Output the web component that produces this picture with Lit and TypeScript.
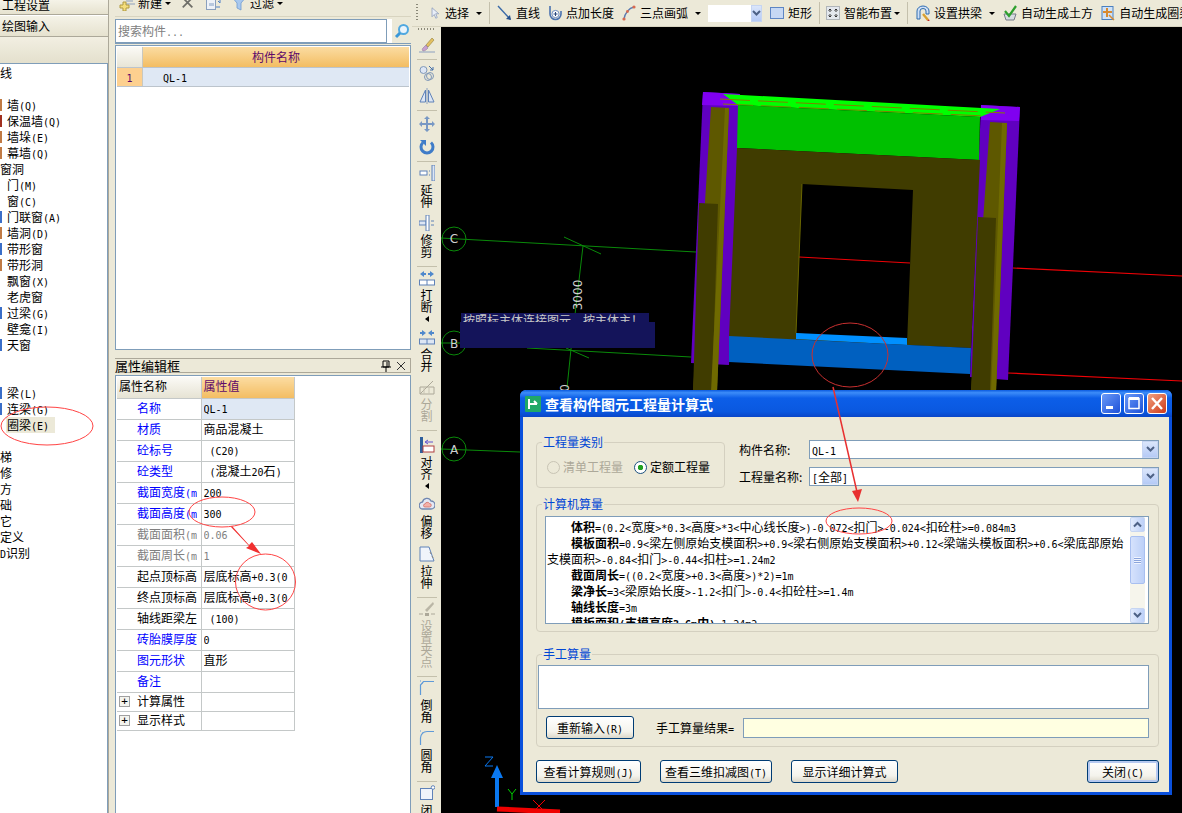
import {LitElement, css, html, svg} from 'lit'
import {customElement} from 'lit/decorators.js'

// SimSun style run: latin is exactly half a CJK cell
const t = (s: string) =>
  s.split(/([\x20-\x7e]+)/).map((p, i) => (i % 2 ? html`<span class="en">${p}</span>` : p))

const icon = (body: unknown, w = 16, h = 16) =>
  html`<svg class="ic" width=${w} height=${h} viewBox="0 0 16 16">${body}</svg>`

const icons: Record<string, unknown> = {
  pointer: svg`<path d="M4 1v12l3-3 2 5 2-1-2-5h4z" fill="#e8eef8" stroke="#8a9ab8"/>`,
  line: svg`<path d="M1 1l12 13" stroke="#3a6aa8" stroke-width="1.4"/><path d="M14 15l-5-1 4-4z" fill="#24508c"/>`,
  pointlen: svg`<path d="M3 1v8a5.5 5.5 0 0 0 11 0V6" fill="none" stroke="#4a72b0" stroke-width="1.6"/><circle cx="8.5" cy="9" r="3.6" fill="#fff" stroke="#6d8cc0"/><path d="M6.5 9h4M8.500 7v4" stroke="#27467a"/>`,
  arc: svg`<path d="M3 14C4 8 8 3 13 2" fill="none" stroke="#5a7ab0" stroke-width="1.5"/><circle cx="3" cy="14" r="1.6" fill="#d86a50"/><circle cx="13" cy="2" r="1.6" fill="#d86a50"/><circle cx="6.500" cy="6.500" r="1.400" fill="#d86a50"/>`,
  rect: svg`<rect x="1.500" y="2.500" width="13" height="11" fill="#c6d8f4" stroke="#5e86c4"/>`,
  smart: svg`<rect x="1.500" y="1.500" width="13" height="13" fill="#e4e8ee" stroke="#7a8490" stroke-dasharray="1 1"/><path d="M5 4v3M3.500 5.500L5 4l1.500 1.500M11 4v3M9.500 5.500L11 4l1.500 1.500M5 12V9M3.500 10.500L5 12l1.500-1.500M11 12V9M9.500 10.500L11 12l1.500-1.500" fill="none" stroke="#333"/>`,
  arch: svg`<path d="M2 14V6a6 5 0 0 1 12 0v3h-3V6a3 2.500 0 0 0-6 0v8z" fill="#cfe0f6" stroke="#2f6cb0"/><path d="M8 9l5 6" stroke="#d8a030" stroke-width="2.400"/><path d="M13 15l1 1" stroke="#c02020" stroke-width="2"/>`,
  soil: svg`<path d="M2 9h12l-2 6H4z" fill="#d8dce2" stroke="#767c88"/><path d="M3 6l4 5 7-10" fill="none" stroke="#2ea02e" stroke-width="2.200"/>`,
  ring: svg`<rect x="2" y="1.500" width="11" height="13" fill="#cfe2f8" stroke="#4a80c0"/><path d="M7 3v9M3 7h9" stroke="#d88a30" stroke-width="2"/><path d="M9 10l5 5" stroke="#d88a30" stroke-width="1.500"/>`,
  brush: svg`<path d="M13 1L7 8l2 2 6-7z" fill="#e4c060" stroke="#908040" stroke-width=".6"/><path d="M7 8l-3 3c-1 1-1 2 0 3 2 0 3-1 5-3z" fill="#c8a0d0" stroke="#807090" stroke-width=".5"/><path d="M0 15h16" stroke="#8ca0c0"/>`,
  link: svg`<circle cx="4.500" cy="5" r="3.500" fill="#dde6f4" stroke="#8098b8"/><circle cx="11" cy="11" r="3.500" fill="none" stroke="#8098b8"/><circle cx="9" cy="12" r="3.500" fill="none" stroke="#8098b8"/><path d="M10 1l4 4M14 2v3h-3" fill="none" stroke="#406ca8"/>`,
  mirror: svg`<path d="M6.500 2v12H1zM9.500 2v12H15z" fill="#dde6f4" stroke="#5f82b8"/><path d="M8 0v16" stroke="#8aa0c0"/>`,
  move: svg`<path d="M8 0l3 3H9v4h4V5l3 3-3 3V9H9v4h2l-3 3-3-3h2V9H3v2L0 8l3-3v2h4V3H5z" fill="#7898c4"/>`,
  rotate: svg`<path d="M4 3.500a6 6 0 1 0 8 0" fill="none" stroke="#3f7cc8" stroke-width="3"/><path d="M1 1h6v6z" fill="#3f7cc8"/>`,
  extend: svg`<rect x="1" y="6" width="7" height="4" fill="#fff" stroke="#5f82b8"/><path d="M10 6h1M10 10h1" stroke="#5f82b8"/><rect x="13" y="0" width="3" height="16" fill="#dde6f4" stroke="#5f82b8"/>`,
  trim: svg`<rect x="0" y="6" width="7" height="4" fill="#dde6f4" stroke="#5f82b8"/><rect x="7" y="0" width="3" height="16" fill="#fff" stroke="#5f82b8"/><path d="M12 6h3M12 10h3" stroke="#5f82b8"/>`,
  break: svg`<path d="M1 4l4-3v2h2v2H5v2zM15 4l-4-3v2H9v2h2v2z" fill="#4f88cc"/><rect x=".5" y="10" width="15" height="5" fill="#fff" stroke="#5f82b8"/><path d="M8 10v5" stroke="#5f82b8"/>`,
  merge: svg`<path d="M7 4L3 1v2H1v2h2v2zM9 4l4-3v2h2v2h-2v2z" fill="#4f88cc"/><rect x=".5" y="10" width="15" height="5" fill="#dde6f4" stroke="#5f82b8"/><path d="M8 10v5" stroke="#5f82b8"/>`,
  split: svg`<path d="M1 8h14v7H1zM1 15l13-13" fill="none" stroke="#aca899"/><path d="M5 8v7M10 8v7" stroke="#c8c4b4"/>`,
  align: svg`<rect x="1" y="0" width="3" height="16" fill="#2f5f9c"/><rect x="4" y="9" width="11" height="6" fill="#fff" stroke="#b04040"/><path d="M14 5H7M9 3L6 5l3 2" fill="none" stroke="#6050d0"/>`,
  offset: svg`<path d="M4 13a3.500 3.500 0 0 1-.5-7A4.500 4.500 0 0 1 12 5a4 4 0 0 1 0 8z" fill="#e4e8f4" stroke="#6f86b0" stroke-width="1.300"/><path d="M6 11a1.500 1.500 0 0 1 0-3 2.500 2.500 0 0 1 4.500-.5 1.700 1.700 0 0 1 0 3.500z" fill="#f4b0a8" stroke="#d07068" stroke-width=".8"/>`,
  stretch: svg`<path d="M1 1h9l5 14H1z" fill="#f0f4fa" stroke="#5f82b8"/><path d="M11 6l1 2M13 10l1 2" stroke="#888"/>`,
  grip: svg`<path d="M14 1L6 9l2 2 7-8z" fill="#bab6a6"/><rect x="6" y="12" width="4" height="3" fill="#aca899"/><path d="M0 13h4M12 13h4" stroke="#aca899"/>`,
  chamfer: svg`<path d="M1.500 15V5l3-3.500H15" fill="none" stroke="#5f9ad8" stroke-width="1.200"/><path d="M1 1h1M3 3h1" stroke="#5f9ad8"/>`,
  fillet: svg`<path d="M1.500 15V8a6.500 6.500 0 0 1 6.500-6.500H15" fill="none" stroke="#5f9ad8" stroke-width="1.200"/><path d="M1 1h1M3 3h1" stroke="#5f9ad8"/>`,
  closed: svg`<rect x="1.500" y="3.500" width="12" height="11" fill="#f0f4fa" stroke="#5f82b8"/><circle cx="14" cy="2.500" r="1.800" fill="#fff" stroke="#5f82b8"/>`,
  add: svg`<path d="M7 3h9M7 6h7M7 9h9" stroke="#8da0bd"/><path d="M4 7v3H1v3h3v3h3v-3h3v-3H7V7z" fill="#f4de7c" stroke="#b09a40"/>`,
  del: svg`<path d="M2 2l11 11M13 2L2 13" stroke="#6e6e68" stroke-width="2"/>`,
  copy: svg`<rect x="1.500" y="4.500" width="9" height="10" fill="#eef2f8" stroke="#8aa0bd"/><rect x="4" y="8" width="5" height="3" fill="#b8c8de"/><path d="M10 1h5v7M15 8l-2-2M11 12h4" fill="none" stroke="#4f80c8"/>`,
  filter: svg`<path d="M0 1h16L10 8v7l-4-2V8z" fill="#a8c8ee" stroke="#6f9ad0" stroke-width=".8"/>`,
  search: svg`<circle cx="9.500" cy="6.500" r="4.500" fill="#eaf4fc" stroke="#50a8e0" stroke-width="2"/><path d="M6 10l-4 4" stroke="#3a98d8" stroke-width="3"/>`,
}

const nav: [string, string][] = [
  ['线', 'root'], ['', ''], ['墙(Q)', 'brick'], ['保温墙(Q)', 'red'], ['墙垛(E)', 'brick'], ['幕墙(Q)', 'brick'],
  ['窗洞', 'root'], ['门(M)', ''], ['窗(C)', ''], ['门联窗(A)', 'blue'], ['墙洞(D)', 'brick'], ['带形窗', 'blue'],
  ['带形洞', 'brick'], ['飘窗(X)', ''], ['老虎窗', ''], ['过梁(G)', 'blue'], ['壁龛(I)', ''], ['天窗', 'blue'],
  ['', ''], ['', ''], ['梁(L)', 'blue'], ['连梁(G)', 'blue'], ['圈梁(E)', 'sel'], ['', ''],
  ['梯', 'root'], ['修', 'root'], ['方', 'root'], ['础', 'root'], ['它', 'root'], ['定义', 'root'], ['D识别', 'root'],
]

const props: [string, string, string?][] = [
  ['名称', 'QL-1', 'link sel'], ['材质', '商品混凝土', 'link'], ['砼标号', ' (C20)', 'link'], ['砼类型', ' (混凝土20石)', 'link'],
  ['截面宽度(mm)', '200', 'link'], ['截面高度(mm)', '300', 'link'], ['截面面积(m2)', '0.06', 'off'], ['截面周长(m)', '1', 'off'],
  ['起点顶标高(m)', '层底标高+0.3(0.3)'], ['终点顶标高(m)', '层底标高+0.3(0.3)'], ['轴线距梁左线距离', ' (100)'],
  ['砖胎膜厚度(mm)', '0', 'link'], ['图元形状', '直形', 'link'], ['备注', '', 'link'],
]

const vtools: [string, string, string?][] = [
  ['brush', ''], ['sep', ''], ['link', ''], ['mirror', ''], ['sep', ''], ['move', ''], ['rotate', ''], ['sep', ''],
  ['extend', '延伸'], ['trim', '修剪'], ['sep', ''], ['break', '打断', 'more'], ['merge', '合并'], ['split', '分割', 'off'], ['sep', 'lg'],
  ['align', '对齐', 'more'], ['offset', '偏移'], ['stretch', '拉伸'], ['sep', ''], ['grip', '设置夹点', 'off'], ['sep', ''],
  ['chamfer', '倒角'], ['fillet', '圆角'], ['sep', ''], ['closed', '闭合'],
]

@customElement('app-root')
export class AppRoot extends LitElement {
  static styles = css`
    :host {
      display: block;
    }

    .app {
      position: relative;
      display: flex;
      width: 1182px;
      height: 813px;
      overflow: hidden;
      background: #ece9d8;
      color: #000;
      font: 12px/16px "Noto Sans CJK SC", sans-serif;
    }

    .en {
      font-family: "DejaVu Sans Mono", "Liberation Mono", monospace;
      font-size: 10px;
      line-height: 0;
      white-space: pre;
    }

    .ic {
      flex: none;
      display: block;
    }

    .caret {
      flex: none;
      width: 0;
      height: 0;
      border: 3px solid transparent;
      border-top: 3px solid #000;
      border-bottom: none;
    }

    /* left tree */
    .nav {
      flex: none;
      width: 108px;
      display: flex;
      flex-direction: column;
    }

    .nav-btn {
      flex: none;
      box-sizing: border-box;
      padding-left: 2px;
      border-bottom: 1px solid #aca899;
      border-top: 1px solid #fff;
      background: linear-gradient(#f5f3e8, #e6e2cf);
      overflow: hidden;
    }

    .nav-btn.first {
      height: 15px;
      line-height: 10px;
      border-top: none;
    }

    .nav-btn.second {
      height: 22px;
      line-height: 20px;
    }

    .nav-head {
      flex: none;
      height: 26px;
      background: linear-gradient(#f2efe2, #e4e0cd);
    }

    .tree {
      flex: 1;
      padding-top: 1px;
      background: #fff;
      border-top: 1px solid #7f9db9;
      border-right: 1px solid #7f9db9;
    }

    .node {
      display: flex;
      align-items: center;
      height: 16px;
      white-space: nowrap;
    }

    .node .mark {
      flex: none;
      width: 2px;
      height: 12px;
      margin-right: 5px;
    }

    .mark.brick { background: #c07a44; }
    .mark.red { background: #a03020; }
    .mark.blue { background: #3a6ec8; }

    .node .label {
      padding: 0 6px 0 0;
    }

    .node.sel .label {
      background: #ece9d8;
      padding-left: 1px;
      margin-left: -1px;
    }

    /* component panel */
    .mid {
      flex: none;
      width: 304px;
      box-sizing: border-box;
      padding: 0 1px 0 6px;
      display: flex;
      flex-direction: column;
      border-left: 1px solid #aca899;
    }

    .mid-bar {
      flex: none;
      box-sizing: border-box;
      height: 17px;
      display: flex;
      align-items: center;
      gap: 3px;
      padding-left: 4px;
      margin-bottom: 2px;
      border-bottom: 1px solid #d8d4c0;
      overflow: hidden;
    }

    .mid-bar > * {
      position: relative;
      top: -5px;
    }

    .mid-bar .gap {
      margin-left: 7px;
    }

    .search {
      flex: none;
      box-sizing: border-box;
      display: flex;
      gap: 5px;
      height: 25px;
      margin-bottom: 1px;
      background: #fff;
      border-bottom: 1px solid #7f9db9;
    }

    .search-box {
      flex: none;
      box-sizing: border-box;
      width: 272px;
      padding: 3px 2px;
      color: #808080;
      background: #fff;
      border: 1px solid #7f9db9;
    }

    .search-btn {
      flex: 1;
      display: flex;
      align-items: center;
      justify-content: center;
      background: #ece9d8;
    }

    .list {
      flex: none;
      box-sizing: border-box;
      height: 305px;
      padding: 1px;
      background: #fff;
      border: 1px solid #7f9db9;
    }

    .list-head, .list-row {
      display: flex;
    }

    .list-head {
      height: 21px;
      box-sizing: border-box;
      border-bottom: 1px solid #bcc4cc;
    }

    .list-head .corner {
      width: 25px;
      border-right: 1px solid #c8c8c0;
      background: linear-gradient(#fbfaf6, #e8e5d6);
    }

    .list-head .title, .prop-head .value {
      background: linear-gradient(#fbdca2, #f3bd62);
      color: #5e0a6a;
    }

    .list-head .title {
      flex: 1;
      line-height: 20px;
      text-align: center;
    }

    .list-row {
      height: 19px;
      box-sizing: border-box;
      border-bottom: 1px solid #bcc4cc;
      line-height: 18px;
    }

    .list-row .no {
      width: 25px;
      border-right: 1px solid #c8c8c0;
      background: #fdd08f;
      color: #5e0a6a;
      text-align: center;
    }

    .list-row .name {
      flex: 1;
      padding-left: 20px;
      background: #dfe8f4;
    }

    .prop-title {
      flex: none;
      box-sizing: border-box;
      display: flex;
      align-items: center;
      height: 15px;
      margin: 8px 0 2px;
      border: 1px solid #aca899;
      border-left: none;
      font-size: 13px;
      line-height: 13px;
    }

    .prop-title .text {
      flex: 1;
    }

    .prop-title .ic {
      margin-right: 3px;
    }

    .prop-panel {
      flex: 1;
      padding: 1px;
      background: #fff;
      border: 1px solid #7f9db9;
      border-bottom: none;
    }

    table {
      table-layout: fixed;
      width: 177px;
      border-collapse: collapse;
    }

    td {
      box-sizing: border-box;
      height: 21px;
      padding: 0 0 2px;
      overflow: hidden;
      white-space: nowrap;
      border: 1px solid #c4c8c8;
      border-width: 0 1px 1px 0;
    }

    .col-a { width: 84px; }
    .col-b { width: 93px; }

    td.name {
      padding-left: 20px;
      position: relative;
    }

    td.name .clip {
      display: block;
      width: 60px;
      overflow: hidden;
    }

    td.val {
      padding-left: 2px;
    }

    td.val .clip {
      display: block;
      width: 85px;
      overflow: hidden;
    }

    .prop-head td {
      height: 21px;
      background: linear-gradient(#fbfaf6, #e6e3d4);
      padding-left: 2px;
    }

    .prop-head td.value {
      background: linear-gradient(#fbdca2, #f3bd62);
    }

    .link td.name { color: #0000ff; }
    .off td { color: #808080; }
    .sel td.val { background: #dfe8f4; }
    tr.short td { height: 19px; }

    .plus {
      position: absolute;
      left: 2px;
      top: 3px;
      width: 11px;
      height: 11px;
      box-sizing: border-box;
      border: 1px solid #a0a0a0;
      background: #f4f4ee;
      font: 11px/9px "DejaVu Sans Mono", monospace;
      text-align: center;
    }

    /* drawing area */
    .main {
      flex: 1;
      min-width: 0;
      display: flex;
      flex-direction: column;
    }

    .toolbar {
      flex: none;
      display: flex;
      align-items: center;
      gap: 7px;
      height: 27px;
      box-sizing: border-box;
      padding-left: 4px;
      white-space: nowrap;
      overflow: hidden;
      border-bottom: 1px solid #d8d4c0;
    }

    .dots {
      flex: none;
      width: 2px;
      height: 18px;
      margin-right: 4px;
      background: repeating-linear-gradient(#8a8878 0 1px, transparent 1px 3px);
    }

    .tb {
      flex: none;
      display: flex;
      align-items: center;
      gap: 3px;
    }

    .tb.narrow {
      gap: 4px;
    }

    .caret.tight {
      margin-left: -5px;
    }

    .tsep {
      flex: none;
      width: 1px;
      height: 22px;
      background: #c4c0ac;
    }

    .tsep.pull {
      margin-right: -2px;
    }

    .tsel {
      flex: none;
      display: flex;
      justify-content: flex-end;
      width: 54px;
      height: 17px;
      background: #fff;
    }

    .drop {
      flex: none;
      display: flex;
      align-items: center;
      justify-content: center;
      width: 11px;
      background: linear-gradient(#dbe6fb, #b5caf6);
      border: 1px solid #c6d5f2;
      box-sizing: border-box;
    }

    .body {
      flex: 1;
      min-height: 0;
      display: flex;
    }

    .vbar {
      flex: none;
      width: 29px;
      box-sizing: border-box;
      padding-top: 1px;
      display: flex;
      flex-direction: column;
      align-items: center;
      overflow: hidden;
    }

    .vdots {
      flex: none;
      width: 18px;
      height: 2px;
      background: repeating-linear-gradient(90deg, #8a8878 0 1px, transparent 1px 3px);
      margin-bottom: 3px;
    }

    .vsep {
      flex: none;
      width: 20px;
      height: 1px;
      margin: 3px 0 1px;
      background: #c4c0ac;
    }

    .vsep.lg {
      margin-bottom: 4px;
    }

    .tool {
      flex: none;
      display: flex;
      flex-direction: column;
      align-items: center;
      height: 23px;
      box-sizing: border-box;
      padding-top: 4px;
    }

    .tool.labeled {
      height: auto;
      padding: 2px 0 5px;
    }

    .tool .v {
      margin-top: 3px;
      width: 13px;
      font-size: 12px;
      line-height: 12px;
      text-align: center;
    }

    .tool.off .v {
      color: #aca899;
    }

    .tool.more::after {
      content: "";
      margin-top: 3px;
      border: 3px solid transparent;
      border-right: 4px solid #000;
      border-left: none;
    }

    .canvas {
      flex: 1;
      min-width: 0;
      background: #000;
    }

    .canvas svg {
      display: block;
    }

    /* dialog */
    .dialog {
      position: absolute;
      left: 520px;
      top: 390px;
      width: 652px;
      height: 405px;
      box-sizing: border-box;
      display: flex;
      flex-direction: column;
      border: 3px solid #0a50dc;
      border-top: none;
      border-radius: 6px 6px 0 0;
      background: #ece9d8;
    }

    .caption {
      flex: none;
      display: flex;
      align-items: center;
      gap: 4px;
      height: 27px;
      margin: 0 -3px;
      padding: 0 5px;
      background: linear-gradient(#0a5ae0 0, #3c8cf8 10%, #0c5ee8 30%, #0a58e0 80%, #0a46c8 100%);
      border-radius: 6px 6px 0 0;
      color: #fff;
      font-size: 14px;
      font-weight: bold;
    }

    .caption .logo {
      flex: none;
    }

    .caption .text {
      flex: 1;
    }

    .win {
      flex: none;
      width: 20px;
      height: 21px;
      box-sizing: border-box;
      margin-left: -1px;
      border: 1px solid #fff;
      border-radius: 3px;
      background: linear-gradient(135deg, #6a9af8, #1c50d8);
    }

    .win svg {
      display: block;
    }

    .win.close {
      background: linear-gradient(135deg, #f0a080, #d03a18);
    }

    .content {
      flex: 1;
      min-height: 0;
      position: relative;
      display: flex;
      flex-direction: column;
      padding: 0 10px 0 13px;
    }

    .top {
      flex: none;
      display: flex;
      gap: 14px;
      margin-top: 19px;
    }

    fieldset {
      margin: 0;
      padding: 0;
      min-width: 0;
      box-sizing: border-box;
      border: 1px solid #d4d0c0;
      border-radius: 4px;
    }

    legend {
      margin-left: 5px;
      padding: 0 1px;
      color: #0046d5;
      line-height: 12px;
      font-size: 12px;
    }

    .kind {
      flex: none;
      width: 189px;
      height: 52px;
    }

    .kind-in {
      display: flex;
      align-items: center;
      gap: 11px;
      height: 38px;
      padding-left: 10px;
    }

    .radio {
      display: flex;
      align-items: center;
      gap: 3px;
    }

    .radio i {
      flex: none;
      width: 13px;
      height: 13px;
      box-sizing: border-box;
      border: 1px solid #1c5180;
      border-radius: 50%;
      background: radial-gradient(circle, #21a121 0 2.500px, #fff 3px);
    }

    .radio.off {
      color: #aca899;
    }

    .radio.off i {
      border-color: #c8c4b4;
      background: #ece9d8;
    }

    .combos {
      flex: 1;
      display: flex;
      flex-direction: column;
      gap: 8px;
      margin-top: 4px;
    }

    .combo-row {
      display: flex;
      align-items: center;
      height: 19px;
    }

    .combo-row .lbl {
      flex: none;
      width: 70px;
    }

    .combo {
      flex: 1;
      display: flex;
      height: 19px;
      box-sizing: border-box;
      padding-left: 2px;
      line-height: 17px;
      background: #fff;
      border: 1px solid #7f9db9;
    }

    .combo .txt {
      flex: 1;
    }

    .combo .drop {
      width: 16px;
    }

    .calc {
      flex: none;
      height: 134px;
      margin-top: 10px;
    }

    .calc-in {
      padding: 6px 9px 0 8px;
    }

    .formula {
      display: flex;
      height: 108px;
      box-sizing: border-box;
      background: #fff;
      border: 1px solid #7f9db9;
    }

    .formula .text {
      flex: 1;
      min-width: 0;
      overflow: hidden;
      padding: 2px 0 0 1px;
      line-height: 16px;
      text-indent: 24px;
    }

    .formula p {
      margin: 0;
      width: 584px;
      word-break: break-all;
    }

    .formula b {
      font-weight: bold;
    }

    .scroll {
      flex: none;
      width: 15px;
      margin-right: 3px;
      display: flex;
      flex-direction: column;
      background: #f6f5ec;
    }

    .scroll .sb {
      flex: none;
      height: 15px;
      display: flex;
      align-items: center;
      justify-content: center;
      background: linear-gradient(90deg, #e2ebfd, #bcd0f8);
      border: 1px solid #c6d5f2;
      box-sizing: border-box;
      border-radius: 2px;
    }

    .scroll .thumb {
      flex: none;
      height: 48px;
      margin: 4px 0 24px;
      box-sizing: border-box;
      border: 1px solid #a8bff0;
      border-radius: 2px;
      background: linear-gradient(90deg, #d6e2fc, #bcd0f8);
      display: flex;
      align-items: center;
      justify-content: center;
    }

    .thumb i {
      width: 7px;
      height: 7px;
      background: repeating-linear-gradient(#f0f4fe 0 1px, #8aa4dc 1px 2px);
    }

    .hand {
      flex: none;
      height: 99px;
      margin-top: 16px;
    }

    .hand-in {
      padding: 5px 9px 0 1px;
    }

    .hand-input {
      height: 44px;
      box-sizing: border-box;
      background: #fff;
      border: 1px solid #7f9db9;
    }

    .hand-row {
      display: flex;
      align-items: center;
      margin: 7px 0 0 8px;
    }

    .hand-row .lbl {
      flex: none;
      margin: 0 9px 0 22px;
    }

    .result {
      flex: 1;
      height: 20px;
      box-sizing: border-box;
      background: #ffffe1;
      border: 1px solid #7f9db9;
    }

    .btn {
      flex: none;
      box-sizing: border-box;
      height: 23px;
      line-height: 21px;
      text-align: center;
      white-space: nowrap;
      border: 1px solid #003c74;
      border-radius: 3px;
      background: linear-gradient(#fff, #f4f3ec 70%, #dcd8ca);
    }

    .btn.reset { width: 88px; }
    .btn.rules { width: 105px; }
    .btn.view { width: 112px; }
    .btn.detail { width: 107px; }

    .btn.close {
      width: 72px;
      margin-left: auto;
      box-shadow: inset 0 0 0 2px #b6c9f0;
    }

    .foot {
      flex: none;
      display: flex;
      gap: 19px;
      margin-top: 13px;
    }

    .notes {
      position: absolute;
      left: 0;
      top: 0;
      pointer-events: none;
    }
  `

  private chevron() {
    return html`<svg width="9" height="7" viewBox="0 0 9 7"><path d="M1 1l3.500 3.500L8 1" fill="none" stroke="#4d6185" stroke-width="2"/></svg>`
  }

  private up() {
    return html`<svg width="9" height="7" viewBox="0 0 9 7"><path d="M1 5.500L4.500 2 8 5.500" fill="none" stroke="#4d6185" stroke-width="2"/></svg>`
  }

  private renderNav() {
    return html`
      <div class="nav">
        <div class="nav-btn first">工程设置</div>
        <div class="nav-btn second">绘图输入</div>
        <div class="nav-head"></div>
        <div class="tree">
          ${nav.map(([text, kind]) => html`
            <div class="node ${kind === 'sel' ? 'sel' : ''}">
              ${kind === 'root' ? '' : html`<span class="mark ${kind}"></span>`}
              <span class="label">${t(text)}</span>
            </div>
          `)}
        </div>
      </div>
    `
  }

  private renderMid() {
    return html`
      <div class="mid">
        <div class="mid-bar">
          ${icon(icons.add)}<span>新建</span><span class="caret"></span>
          <span class="gap">${icon(icons.del, 14, 14)}</span>
          <span class="gap">${icon(icons.copy)}</span>
          <span class="gap">${icon(icons.filter)}</span><span>过滤</span><span class="caret"></span>
        </div>
        <div class="search">
          <div class="search-box">搜索构件${t('...')}</div>
          <div class="search-btn">${icon(icons.search)}</div>
        </div>
        <div class="list">
          <div class="list-head"><div class="corner"></div><div class="title">构件名称</div></div>
          <div class="list-row"><div class="no">${t('1')}</div><div class="name">${t('QL-1')}</div></div>
        </div>
        <div class="prop-title">
          <span class="text">属性编辑框</span>
          <svg class="ic" width="12" height="12" viewBox="0 0 12 12"><path d="M3 1h6v6H3zM1 7h10M6 7v5M7 2v5" fill="none" stroke="#000"/></svg>
          <svg class="ic" width="12" height="12" viewBox="0 0 12 12"><path d="M2 2l8 8M10 2l-8 8" stroke="#333"/></svg>
        </div>
        <div class="prop-panel">
          <table>
            <colgroup><col class="col-a"><col class="col-b"></colgroup>
            <tr class="prop-head"><td>属性名称</td><td class="value">属性值</td></tr>
            ${props.map(([name, val, cls]) => html`
              <tr class=${cls ?? ''}>
                <td class="name"><span class="clip">${t(name)}</span></td>
                <td class="val"><span class="clip">${t(val)}</span></td>
              </tr>
            `)}
            <tr class="short"><td class="name"><span class="plus">+</span>计算属性</td><td></td></tr>
            <tr class="short"><td class="name"><span class="plus">+</span>显示样式</td><td></td></tr>
          </table>
        </div>
      </div>
    `
  }

  private renderToolbar() {
    return html`
      <div class="toolbar">
        <span class="dots"></span>
        <span class="tb narrow">${icon(icons.pointer, 12, 16)}选择</span><span class="caret"></span>
        <span class="tsep"></span>
        <span class="tb">${icon(icons.line)}直线</span>
        <span class="tb">${icon(icons.pointlen)}点加长度</span>
        <span class="tb">${icon(icons.arc)}三点画弧</span><span class="caret"></span>
        <span class="tsel"><span class="drop">${this.chevron()}</span></span>
        <span class="tb">${icon(icons.rect)}矩形</span>
        <span class="tsep pull"></span>
        <span class="tb">${icon(icons.smart)}智能布置</span><span class="caret tight"></span>
        <span class="tsep"></span>
        <span class="tb">${icon(icons.arch)}设置拱梁</span><span class="caret"></span>
        <span class="tb">${icon(icons.soil)}自动生成土方</span>
        <span class="tb">${icon(icons.ring)}自动生成圈梁</span>
      </div>
    `
  }

  private renderVbar() {
    return html`
      <div class="vbar">
        <span class="vdots"></span>
        ${vtools.map(([name, label, flag]) => name === 'sep'
          ? html`<span class="vsep ${label}"></span>`
          : html`
            <div class="tool ${label ? 'labeled' : ''} ${flag ?? ''}">
              ${icon(icons[name])}
              ${label ? html`<span class="v">${label}</span>` : ''}
            </div>
          `)}
      </div>
    `
  }

  private renderCanvas() {
    return html`
      <div class="canvas">
        <svg width="741" height="786" viewBox="441 27 741 786" font-family="DejaVu Sans, sans-serif">
          <!-- axes -->
          <g stroke="#0a8a0a" fill="none">
            <circle cx="454" cy="239" r="12"/>
            <path d="M441 238L696 252M564 237L601 254M583 246L571 349L567 388"/>
            <circle cx="454" cy="343" r="12"/>
            <path d="M441 343H466M527 348L691 357M566 348L589 358"/>
            <circle cx="454" cy="449" r="12"/>
            <path d="M441 449L520 452"/>
          </g>
          <g fill="#d0d0d0" font-size="12" text-anchor="middle">
            <text x="454" y="243">C</text>
            <text x="454" y="348">B</text>
            <text x="454" y="454">A</text>
            <text transform="translate(582 295) rotate(-90)">3000</text>
            <text transform="translate(569 388) rotate(-90)">0</text>
          </g>
          <path d="M799 257L910 263M1013 268L1182 276M1008 373L1182 381" stroke="#f00206" stroke-width="1.200"/>

          <!-- hint box, its text half hidden by the lower band -->
          <rect x="461" y="313" width="188" height="9" fill="#14145a"/>
          <text x="463" y="325" font-size="12" fill="#c8c8c8" font-family="Noto Sans CJK SC, sans-serif">按照标主体连接图元，按主体主！</text>
          <rect x="460" y="322" width="195" height="26" fill="#14145a"/>

          <!-- wall block -->
          <path d="M703 92L740 94L729 365L691 363z" fill="#6000c0"/>
          <path d="M703 92L740 94L738 106L702 105z" fill="#8000f0"/>
          <path d="M981 105L1020 107L1008 380L970 377z" fill="#6000c0"/>
          <path d="M981 105L1020 107L1019 121L981 120z" fill="#8000f0"/>
          <path d="M723 94L1000 109L980 117L738 105z" fill="#00ff00"/>
          <path d="M720 99L1005 113M723 104L985 116" stroke="#808000" stroke-width="1" stroke-dasharray="30 8"/>
          <path d="M738 105L980 117L979 160L737 148z" fill="#00c000"/>
          <path fill-rule="evenodd" d="M737 148L980 160L971 348L729 337zM802 184L796 333L907 345L913 190z" fill="#403c00"/>
          <path d="M802 184L796 333" stroke="#6a6600" stroke-width="1"/>
          <path d="M796 333L907 338V345L796 339z" fill="#0090ff"/>
          <path d="M729 336L971 348L970 374L729 362z" fill="#0060c0"/>
          <path d="M711 107L729 108L717 392L693 392z" fill="#5e5800"/>
          <path d="M699 203L718 204L712 392L693 392z" fill="#403c00"/>
          <path d="M725 108L729 108L717 392L711 392z" fill="#6f6a00"/>
          <path d="M990 122L1007 123L996 392L971 392z" fill="#5e5800"/>
          <path d="M978 217L996 218L990 392L971 392z" fill="#403c00"/>
          <path d="M1002 123L1007 123L996 392L991 392z" fill="#6f6a00"/>

          <!-- origin -->
          <path d="M497 807V790" stroke="#00e000" stroke-width="1.500"/>
          <path d="M495 807V778H491L497 765L503 778H499V807z" fill="#0a78f0"/>
          <path d="M497 809L560 812" stroke="#f00000" stroke-width="5"/>
          <g fill="none" stroke-width="1">
            <path d="M485 757H493L485 766H493" stroke="#0a78f0"/>
            <path d="M508 789L512 794L516 789M512 794V800" stroke="#00d000"/>
            <path d="M533 800L545 812M545 800L533 812" stroke="#f00000"/>
          </g>
        </svg>
      </div>
    `
  }

  private renderDialog() {
    return html`
      <div class="dialog">
        <div class="caption">
          <svg class="logo" width="16" height="16" viewBox="0 0 16 16"><rect width="16" height="16" rx="1" fill="#20a868"/><path d="M4 3v10M4 8h8M9 5l3 3" stroke="#fff" stroke-width="2" fill="none"/></svg>
          <span class="text">查看构件图元工程量计算式</span>
          <span class="win"><svg width="18" height="19" viewBox="0 0 18 19"><rect x="4" y="12" width="7" height="3" fill="#fff"/></svg></span>
          <span class="win"><svg width="18" height="19" viewBox="0 0 18 19"><path d="M4 4.500h10v10H4z" fill="none" stroke="#fff" stroke-width="1.500"/><path d="M4 4.500h10" stroke="#fff" stroke-width="3"/></svg></span>
          <span class="win close"><svg width="18" height="19" viewBox="0 0 18 19"><path d="M4 4l10 11M14 4L4 15" stroke="#fff" stroke-width="2.400"/></svg></span>
        </div>
        <div class="content">
          <div class="top">
            <fieldset class="kind">
              <legend>工程量类别</legend>
              <div class="kind-in">
                <span class="radio off"><i></i>清单工程量</span>
                <span class="radio"><i></i>定额工程量</span>
              </div>
            </fieldset>
            <div class="combos">
              <div class="combo-row"><span class="lbl">构件名称:</span><div class="combo"><span class="txt">${t('QL-1')}</span><span class="drop">${this.chevron()}</span></div></div>
              <div class="combo-row"><span class="lbl">工程量名称:</span><div class="combo"><span class="txt">${t('[')}全部${t(']')}</span><span class="drop">${this.chevron()}</span></div></div>
            </div>
          </div>
          <fieldset class="calc">
            <legend>计算机算量</legend>
            <div class="calc-in">
              <div class="formula">
                <div class="text">
                  <p><b>体积</b>${t('=(0.2<')}宽度${t('>*0.3<')}高度${t('>*3<')}中心线长度${t('>)-0.072<')}扣门${t('>-0.024<')}扣砼柱${t('>=0.084m3')}</p>
                  <p><b>模板面积</b>${t('=0.9<')}梁左侧原始支模面积${t('>+0.9<')}梁右侧原始支模面积${t('>+0.12<')}梁端头模板面积${t('>+0.6<')}梁底部原始支模面积${t('>-0.84<')}扣门${t('>-0.44<')}扣柱${t('>=1.24m2')}</p>
                  <p><b>截面周长</b>${t('=((0.2<')}宽度${t('>+0.3<')}高度${t('>)*2)=1m')}</p>
                  <p><b>梁净长</b>${t('=3<')}梁原始长度${t('>-1.2<')}扣门${t('>-0.4<')}扣砼柱${t('>=1.4m')}</p>
                  <p><b>轴线长度</b>${t('=3m')}</p>
                  <p><b>模板面积${t('(')}支模高度${t('3.6m')}内${t(')')}</b>${t('=1.24m2')}</p>
                </div>
                <div class="scroll">
                  <span class="sb">${this.up()}</span>
                  <span class="thumb"><i></i></span>
                  <span class="sb">${this.chevron()}</span>
                </div>
              </div>
            </div>
          </fieldset>
          <fieldset class="hand">
            <legend>手工算量</legend>
            <div class="hand-in">
              <div class="hand-input"></div>
              <div class="hand-row">
                <span class="btn reset">重新输入${t('(R)')}</span>
                <span class="lbl">手工算量结果${t('=')}</span>
                <div class="result"></div>
              </div>
            </div>
          </fieldset>
          <div class="foot">
            <span class="btn rules">查看计算规则${t('(J)')}</span>
            <span class="btn view">查看三维扣减图${t('(T)')}</span>
            <span class="btn detail">显示详细计算式</span>
            <span class="btn close">关闭${t('(C)')}</span>
          </div>
        </div>
      </div>
    `
  }

  render() {
    return html`
      <div class="app">
        ${this.renderNav()}
        ${this.renderMid()}
        <div class="main">
          ${this.renderToolbar()}
          <div class="body">
            ${this.renderVbar()}
            ${this.renderCanvas()}
          </div>
        </div>
        ${this.renderDialog()}
        <!-- hand drawn red marks on top of the whole shot -->
        <svg class="notes" width="1182" height="813" viewBox="0 0 1182 813" fill="none" stroke="#f44" stroke-width="1">
          <ellipse cx="47" cy="426" rx="46" ry="19"/>
          <ellipse cx="222" cy="512" rx="33" ry="15"/>
          <ellipse cx="265.500" cy="582" rx="30" ry="28"/>
          <ellipse cx="850" cy="355" rx="38" ry="32" stroke="#c83030"/>
          <ellipse cx="859" cy="521" rx="33" ry="13"/>
          <path d="M232 526L249 545L252 542L261 554L246 548L249 546L231 527z" fill="#f03030" stroke="none"/>
          <path d="M833 387L857 492" stroke="#e83030" stroke-width="1.500"/>
          <path d="M852 491L862 489L858 502z" fill="#e83030" stroke="none"/>
        </svg>
      </div>
    `
  }
}
